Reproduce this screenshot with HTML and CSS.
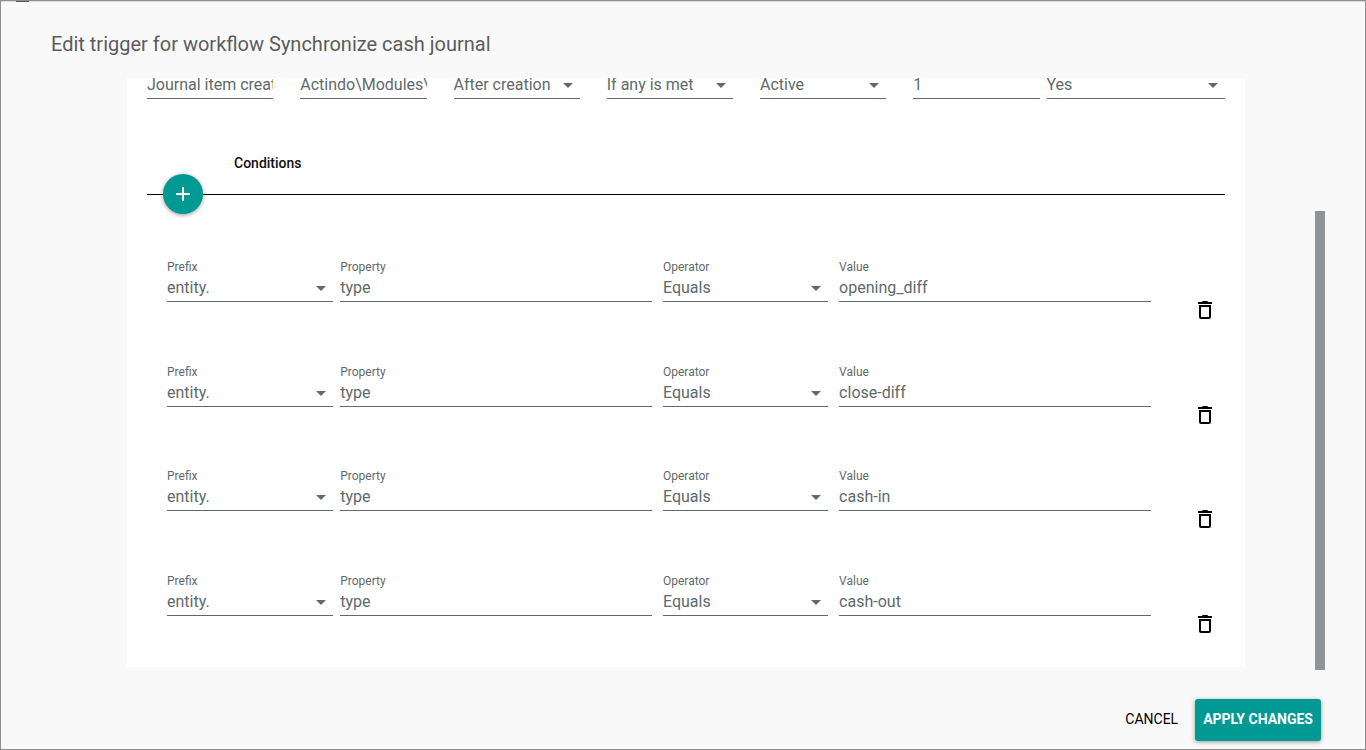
FILE: index.html
```html
<!DOCTYPE html>
<html lang="en">
<head>
<meta charset="utf-8">
<meta name="viewport" content="width=device-width, initial-scale=1">
<title>Edit trigger</title>
<link rel="stylesheet" href="styles.css">
</head>
<body>
<svg class="sprite" aria-hidden="true">
  <symbol id="arrow" viewBox="0 0 10 5"><path d="M0 0h10L5 5z"/></symbol>
  <symbol id="trash" viewBox="0 0 24 24"><path fill-rule="evenodd" d="M9 4q0-1 1-1h4q1 0 1 1h4v2H5V4zM6 7h12v12q0 2-2 2H8q-2 0-2-2zM8 9v10h8V9z"/></symbol>
</svg>
<main class="dialog">
  <h1 class="dialog-title">Edit trigger for workflow Synchronize cash journal</h1>
  <div class="dialog-body">
    <form class="card" id="trigger-form">
      <div class="trigger-row">
        <div class="trigger-main">
          <input class="control" type="text" aria-label="Name" value="Journal item created">
          <input class="control" type="text" aria-label="Entity" value="Actindo\Modules\Actindo">
          <div class="select"><select class="control" aria-label="Event"><option>After creation</option></select><svg class="arrow"><use href="#arrow"/></svg></div>
          <div class="select"><select class="control" aria-label="Condition mode"><option>If any is met</option></select><svg class="arrow"><use href="#arrow"/></svg></div>
          <div class="select"><select class="control" aria-label="Status"><option>Active</option></select><svg class="arrow"><use href="#arrow"/></svg></div>
          <input class="control" type="text" aria-label="Priority" value="1">
        </div>
        <div class="select"><select class="control" aria-label="Enabled"><option>Yes</option></select><svg class="arrow"><use href="#arrow"/></svg></div>
      </div>

      <div class="section-head">
        <h2 class="section-title">Conditions</h2>
        <button class="fab" type="button" aria-label="Add condition"><svg viewBox="0 0 24 24" class="fab-icon"><path d="M11 5h2v6h6v2h-6v6h-2v-6H5v-2h6z"/></svg></button>
      </div>

      <div class="conditions">
        <div class="condition">
          <div class="pair">
            <div class="field"><label class="label" for="prefix1">Prefix</label><div class="select"><select class="control" id="prefix1"><option>entity.</option></select><svg class="arrow"><use href="#arrow"/></svg></div></div>
            <div class="field"><label class="label" for="property1">Property</label><input class="control" id="property1" type="text" value="type"></div>
          </div>
          <div class="pair pair-wide">
            <div class="field"><label class="label" for="operator1">Operator</label><div class="select"><select class="control" id="operator1"><option>Equals</option></select><svg class="arrow"><use href="#arrow"/></svg></div></div>
            <div class="field"><label class="label" for="value1">Value</label><input class="control" id="value1" type="text" value="opening_diff"></div>
          </div>
          <button class="delete" type="button" aria-label="Delete condition"><svg class="delete-icon"><use href="#trash"/></svg></button>
        </div>
        <div class="condition">
          <div class="pair">
            <div class="field"><label class="label" for="prefix2">Prefix</label><div class="select"><select class="control" id="prefix2"><option>entity.</option></select><svg class="arrow"><use href="#arrow"/></svg></div></div>
            <div class="field"><label class="label" for="property2">Property</label><input class="control" id="property2" type="text" value="type"></div>
          </div>
          <div class="pair pair-wide">
            <div class="field"><label class="label" for="operator2">Operator</label><div class="select"><select class="control" id="operator2"><option>Equals</option></select><svg class="arrow"><use href="#arrow"/></svg></div></div>
            <div class="field"><label class="label" for="value2">Value</label><input class="control" id="value2" type="text" value="close-diff"></div>
          </div>
          <button class="delete" type="button" aria-label="Delete condition"><svg class="delete-icon"><use href="#trash"/></svg></button>
        </div>
        <div class="condition">
          <div class="pair">
            <div class="field"><label class="label" for="prefix3">Prefix</label><div class="select"><select class="control" id="prefix3"><option>entity.</option></select><svg class="arrow"><use href="#arrow"/></svg></div></div>
            <div class="field"><label class="label" for="property3">Property</label><input class="control" id="property3" type="text" value="type"></div>
          </div>
          <div class="pair pair-wide">
            <div class="field"><label class="label" for="operator3">Operator</label><div class="select"><select class="control" id="operator3"><option>Equals</option></select><svg class="arrow"><use href="#arrow"/></svg></div></div>
            <div class="field"><label class="label" for="value3">Value</label><input class="control" id="value3" type="text" value="cash-in"></div>
          </div>
          <button class="delete" type="button" aria-label="Delete condition"><svg class="delete-icon"><use href="#trash"/></svg></button>
        </div>
        <div class="condition">
          <div class="pair">
            <div class="field"><label class="label" for="prefix4">Prefix</label><div class="select"><select class="control" id="prefix4"><option>entity.</option></select><svg class="arrow"><use href="#arrow"/></svg></div></div>
            <div class="field"><label class="label" for="property4">Property</label><input class="control" id="property4" type="text" value="type"></div>
          </div>
          <div class="pair pair-wide">
            <div class="field"><label class="label" for="operator4">Operator</label><div class="select"><select class="control" id="operator4"><option>Equals</option></select><svg class="arrow"><use href="#arrow"/></svg></div></div>
            <div class="field"><label class="label" for="value4">Value</label><input class="control" id="value4" type="text" value="cash-out"></div>
          </div>
          <button class="delete" type="button" aria-label="Delete condition"><svg class="delete-icon"><use href="#trash"/></svg></button>
        </div>
      </div>
    </form>
    <div class="scrollbar" aria-hidden="true"><div class="scroll-thumb"></div></div>
  </div>
  <div class="actions">
    <button class="button" type="button">CANCEL</button>
    <button class="button button-primary" type="submit" form="trigger-form">APPLY CHANGES</button>
  </div>
</main>
</body>
</html>
```
FILE: styles.css
```css
*, *::before, *::after { box-sizing: border-box; }

body {
  margin: 0;
  font-family: Roboto, "Liberation Sans", sans-serif;
  color: #5f6a6a;
}

.sprite { position: absolute; width: 0; height: 0; }

.dialog {
  position: relative;
  display: flex;
  flex-direction: column;
  min-height: 100vh;
  padding: 0 40px 0 50px;
  border: 1px solid #8f8f8f;
  background: #f9f9f9;
  box-shadow: inset 0 1px #dcdcdc;
}

/* Edge of the page menu behind the dialog */
.dialog::before {
  content: "";
  position: absolute;
  top: 0;
  left: 15px;
  width: 13px;
  height: 1px;
  background: #555;
}

.dialog-title {
  margin: 0;
  padding: 29px 0 20px;
  font-size: 20px;
  line-height: 28px;
  font-weight: 400;
  color: #5c5c5c;
}

.dialog-body { flex: 1; display: flex; }

.card {
  flex: 1;
  display: flex;
  flex-direction: column;
  margin: 0 70px 3px 76px;
  padding: 0 20px;
  background: #fff;
  overflow: hidden;
}

.trigger-row {
  display: grid;
  grid-template-columns: 5fr 1fr;
  gap: 7px;
  margin-top: -7px;
}

.trigger-main {
  display: grid;
  grid-template-columns: repeat(6, minmax(0, 1fr));
  gap: 27px;
}

.control {
  display: block;
  width: 100%;
  height: 28px;
  margin: 0;
  padding: 0;
  border: 0;
  border-bottom: 1px solid #5f6a6a;
  border-radius: 0;
  outline: 0;
  background: none;
  appearance: none;
  font: 400 16px Roboto, "Liberation Sans", sans-serif;
  color: #5f6a6a;
}

.select { position: relative; }

.arrow {
  position: absolute;
  right: 7px;
  bottom: 11px;
  width: 10px;
  height: 5px;
  fill: #5f6a6a;
  pointer-events: none;
}

.section-head {
  position: relative;
  padding: 54px 0 21px 87px;
  border-bottom: 1px solid #000;
}

.section-title {
  margin: 0;
  font-size: 14px;
  line-height: 20px;
  font-weight: 500;
  color: #111;
}

.fab {
  position: absolute;
  left: 16px;
  bottom: -20px;
  display: grid;
  place-items: center;
  width: 40px;
  height: 40px;
  padding: 0;
  border: 0;
  border-radius: 50%;
  background: #009994;
  box-shadow: 0 1px 4px rgba(0, 0, 0, 0.4);
}

.fab-icon { width: 24px; height: 24px; fill: #fff; }

.conditions {
  flex: 1;
  display: grid;
  grid-auto-rows: minmax(82px, 1fr);
  margin-top: 53px;
  padding-bottom: 1px;
}

.condition {
  display: grid;
  grid-template-columns: 485fr 511fr 40px;
  align-items: start;
  gap: 11px;
  padding: 12px 0 0 20px;
}

.pair {
  display: grid;
  grid-template-columns: 8fr 15fr;
  gap: 7px;
}

.pair-wide {
  grid-template-columns: 9fr 17fr;
  gap: 11px;
  margin-right: 23px;
}

.label { display: block; font-size: 12px; line-height: 14px; }

.delete {
  display: grid;
  place-items: center;
  height: 40px;
  margin-top: 30px;
  padding: 0;
  border: 0;
  background: none;
}

.delete-icon { width: 24px; height: 24px; fill: #000; }

.scrollbar { display: flex; flex-direction: column; width: 10px; padding-top: 133px; }
.scroll-thumb { flex: 1; background: #909496; }

.actions {
  display: flex;
  justify-content: flex-end;
  gap: 9px;
  padding: 29px 4px 8px 0;
}

.button {
  height: 42px;
  padding: 0 8px 2px;
  border: 0;
  border-radius: 3px;
  background: none;
  font: 400 14px Roboto, "Liberation Sans", sans-serif;
  color: #000;
}

.button-primary {
  background: #009994;
  color: #fff;
  font-weight: 700;
  box-shadow: 0 1px 4px rgba(0, 0, 0, 0.4);
}
```
